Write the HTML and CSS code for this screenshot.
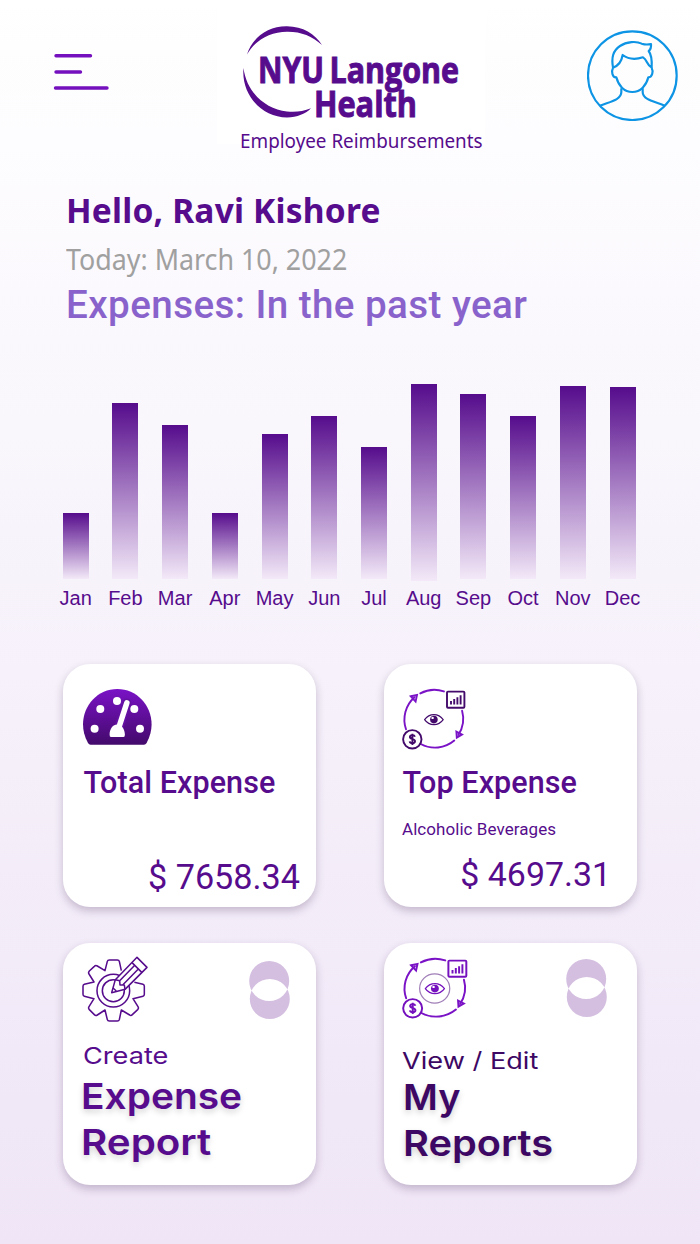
FILE: index.html
```html
<!DOCTYPE html>
<html lang="en">
<head>
<meta charset="utf-8">
<title>NYU Langone Health – Employee Reimbursements</title>
<link rel="stylesheet" href="styles.css">
</head>
<body>
<svg class="defs" width="0" height="0" aria-hidden="true">
  <symbol id="cycle" viewBox="0 0 66 64" preserveAspectRatio="none">
    <g class="cycle-arc">
      <path d="M5 42.3A29.8 29.8 0 0 1 13.5 10.3"/>
      <path d="M9.8 9.3L16 8L14.6 14.6Z"/>
      <path d="M19.3 6.4A29.8 29.8 0 0 1 42.9 4.4"/>
      <path d="M61.1 23.7A29.8 29.8 0 0 1 57.3 48"/>
      <path d="M55.4 44.6L55.8 50.6L61 47.6Z"/>
      <path d="M53.3 53.6A29.8 29.8 0 0 1 19.8 57"/>
    </g>
    <g class="cycle-node">
      <rect x="46" y="4.6" width="17.4" height="16.2" rx="1"/>
      <path d="M50 17.5v-3.5M53.2 17.5v-5.4M56.4 17.5v-7.2M59.6 17.5v-9.3"/>
      <circle cx="11.3" cy="52.3" r="9.2"/>
      <path d="M13.9 49.7c-.5-2.1-5-2.1-5 .4c0 2.7 5.1 1.5 5.1 4.2c0 2.5-4.9 2.5-5.3.1M11.4 46.7v11.2"/>
      <path class="cycle-eye" d="M23.6 32.6C28.4 25.9 37.4 25.9 42.2 32.6C37.4 39.3 28.4 39.3 23.6 32.6Z"/>
      <circle class="cycle-pupil" cx="32.9" cy="32.6" r="3.8"/>
      <circle class="cycle-glint" cx="31.6" cy="30.9" r="1.2"/>
    </g>
  </symbol>
  <symbol id="rings" viewBox="0 0 41 58">
    <path fill-rule="evenodd" d="M.2 20a20 20 0 0 1 40 0a20 20 0 0 1-40 0ZM.8 38a20 20 0 0 1 40 0a20 20 0 0 1-40 0Z"/>
  </symbol>
</svg>

<header class="header">
  <svg class="menu" viewBox="0 0 56 40">
    <path d="M3 3.7H37.500M3 20H27.500M2.500 36H54"/>
  </svg>
  <div class="brand">
    <svg class="logo" viewBox="217 0 268 126">
      <path d="M247 54.500C252 38 268 26 287 26.300C303 26.500 315 34 322 45C312 36 301 31.500 287 31.700C270 32 255 40 247 54.500Z"/>
      <path d="M243.500 68C241 95 262 117.500 287 117.500C297 117.500 306 113.500 311 108.300C303 111.500 295 112.500 287 111.500C265 109 246.500 92 243.500 68Z"/>
      <text x="258" y="82.700" textLength="66" lengthAdjust="spacingAndGlyphs">NYU</text>
      <text x="329.500" y="82.700" textLength="129.500" lengthAdjust="spacingAndGlyphs">Langone</text>
      <text x="314" y="117" textLength="103" lengthAdjust="spacingAndGlyphs">Health</text>
    </svg>
    <p class="tagline">Employee Reimbursements</p>
  </div>
  <svg class="avatar" viewBox="51 29 273 273">
    <circle cx="187" cy="166" r="133"/>
    <path d="M129 142C124 112 128 92 150 77C170 63 200 62 215 70C224 73 235 73 243 71C244 80 241 88 236 92C246 105 246 125 245 142C230 134 232 118 219 111C200 117 175 117 158 104C155 122 146 136 129 142Z"/>
    <path d="M129 143C124 152 126 172 139 171C145 195 162 215 187 215C212 215 229 195 235 171C248 170 250 152 245 143"/>
    <path d="M154 204V215C154 240 115 245 90 256M218 204V215C218 240 260 245 284 256"/>
  </svg>
</header>

<section class="intro">
  <h1 class="hello">Hello, Ravi Kishore</h1>
  <p class="today">Today: March 10, 2022</p>
  <h2 class="period">Expenses: In the past year</h2>
</section>

<section class="chart">
  <div class="month"><i class="bar" style="height:65.500px"></i><span>Jan</span></div>
  <div class="month"><i class="bar" style="height:175.500px"></i><span>Feb</span></div>
  <div class="month"><i class="bar" style="height:153.500px"></i><span>Mar</span></div>
  <div class="month"><i class="bar" style="height:65.500px"></i><span>Apr</span></div>
  <div class="month"><i class="bar" style="height:144.700px"></i><span>May</span></div>
  <div class="month"><i class="bar" style="height:162.500px"></i><span>Jun</span></div>
  <div class="month"><i class="bar" style="height:131.500px"></i><span>Jul</span></div>
  <div class="month"><i class="bar bar-long" style="height:197.500px"></i><span>Aug</span></div>
  <div class="month"><i class="bar" style="height:184.500px"></i><span>Sep</span></div>
  <div class="month"><i class="bar" style="height:162.500px"></i><span>Oct</span></div>
  <div class="month"><i class="bar" style="height:192.300px"></i><span>Nov</span></div>
  <div class="month"><i class="bar" style="height:191.500px"></i><span>Dec</span></div>
</section>

<main class="cards">
  <article class="card total">
    <svg class="gauge" viewBox="0 0 69 56">
      <defs><linearGradient id="gaugeFill" x1="0" y1="0" x2="0" y2="1"><stop offset="0" stop-color="#7a12c6"/><stop offset="1" stop-color="#430a6b"/></linearGradient></defs>
      <path fill="url(#gaugeFill)" d="M7.500 55.700Q6 55.700 5 54C1.500 48 0 41 0 35.500C0 16 15 0 34.300 0S68.600 16 68.600 35.500C68.600 41 67 48 63.600 54Q62.600 55.700 61 55.700Z"/>
      <g fill="#fff"><circle cx="11.600" cy="39.700" r="4"/><circle cx="17.300" cy="20" r="4"/><circle cx="34" cy="12" r="4"/><circle cx="51.300" cy="20" r="4"/><circle cx="57" cy="39.700" r="4"/></g>
      <path d="M36 38L43.800 14" stroke="#6410a2" stroke-width="9" stroke-linecap="round"/>
      <path d="M36 38L43.800 14" stroke="#fff" stroke-width="5.600" stroke-linecap="round"/>
      <path fill="#fff" d="M28 48Q26.500 48 26.600 45.500C26.800 39.500 30 35.500 34.200 35.500S41.700 39.500 41.900 45.500Q42 48 40.500 48Z"/>
    </svg>
    <h3 class="card-title">Total Expense</h3>
    <p class="amount">$ 7658.34</p>
  </article>

  <article class="card top">
    <svg class="cycle" viewBox="0 0 66 64"><use href="#cycle"/></svg>
    <h3 class="card-title">Top Expense</h3>
    <p class="category">Alcoholic Beverages</p>
    <p class="amount">$ 4697.31</p>
  </article>

  <article class="card create">
    <div class="card-head">
      <svg class="gear" viewBox="18 12 204 207">
        <path d="M139 62L133 34Q132 30 127 30H103Q98 30 97 34L90 62L67 48Q62 45 58 49L43 63Q39 68 42 72L57 96L28 103Q24 104 24 109V133Q24 138 28 139L57 146L42 170Q39 175 43 179L58 194Q62 198 67 195L90 180L97 209Q98 213 103 213H127Q132 213 133 209L139 180L164 195Q168 198 172 194L188 179Q192 175 189 170L174 146L204 139Q208 138 208 133V109Q208 104 204 103L178 97"/>
        <circle cx="115" cy="122" r="49"/><circle cx="115" cy="122" r="33"/>
        <path class="pencil" d="M110 128L121 89L186 22L216 52L150 118Z"/>
        <path d="M121 89L134 92L135 105L148 105L150 118M134 92L180 45M143 105L190 57M171 38L201 68M114 114L124 123"/>
      </svg>
      <svg class="rings"><use href="#rings"/></svg>
    </div>
    <p class="action">Create</p>
    <h3 class="headline"><span class="l1">Expense</span><span class="l2">Report</span></h3>
  </article>

  <article class="card view">
    <div class="card-head">
      <svg class="cycle" viewBox="0 0 66 64" preserveAspectRatio="none"><circle class="eye-ring" cx="32.700" cy="32.500" r="14.600"/><use href="#cycle"/></svg>
      <svg class="rings"><use href="#rings"/></svg>
    </div>
    <p class="action">View / Edit</p>
    <h3 class="headline"><span class="l1">My</span><span class="l2">Reports</span></h3>
  </article>
</main>
</body>
</html>
```
FILE: styles.css
```css
* { box-sizing: border-box; }
body {
  margin: 0;
  width: 700px;
  height: 1244px;
  overflow: hidden;
  color: #560c8c;
  background: linear-gradient(#ffffff 0%, #f9f6fc 35%, #efe5f6 100%);
  font-family: Roboto, sans-serif;
}
h1, h2, h3, p { margin: 0; white-space: nowrap; }
svg { display: block; flex: none; }
.defs { position: absolute; }

.header {
  display: flex;
  height: 160px;
  padding-left: 53px;
}
.menu {
  width: 56px;
  height: 40px;
  margin-top: 52px;
  fill: none;
  stroke: #7410bd;
  stroke-width: 3.4;
  stroke-linecap: round;
}
.brand { width: 268px; height: 144px; margin-left: 108px; background: #fff; }
.logo { width: 268px; height: 126px; fill: #560c8c; overflow: visible; }
.logo text {
  font: 700 36.5px "Open Sans", "Noto Sans", sans-serif;
  stroke: #560c8c;
  stroke-width: 1;
}
.tagline {
  padding-left: 24.500px;
  font: 400 20px/29px "Noto Sans", sans-serif;
  transform-origin: left;
  transform: scaleX(.942);
}
.avatar {
  width: 91px;
  height: 91px;
  margin: 30px 0 0 102px;
  fill: none;
  stroke: #0d94e4;
  stroke-width: 6.500;
  stroke-linejoin: round;
}

.intro { padding: 28px 0 0 66px; }
.hello { font: 700 33.500px/45px "Noto Sans", sans-serif; letter-spacing: .2px; }
.today {
  margin-top: 4px;
  color: #a0a0a0;
  font: 400 29px/44px "Noto Sans", sans-serif;
  transform-origin: left;
  transform: scaleX(.925);
}
.period { color: #8963cb; font: 500 38.600px/48px Roboto, sans-serif; letter-spacing: .43px; }

.chart {
  display: grid;
  grid-template-columns: repeat(12, 49.720px);
  align-items: end;
  height: 281px;
  padding-left: 50.800px;
}
.month {
  display: flex;
  flex-direction: column;
  align-items: center;
  font: 20px/24px "Liberation Sans", Arial, sans-serif;
}
.month span { margin-top: 7.500px; }
.bar { width: 26px; background: linear-gradient(#560c8c, #f3e9f8); }
.bar-long { margin-bottom: -2.500px; }

.cards {
  display: grid;
  grid-template-columns: 253px 253px;
  grid-template-rows: 243px 242px;
  gap: 36px 68px;
  padding: 54px 0 0 63px;
}
.card {
  display: flex;
  flex-direction: column;
  padding-left: 19px;
  border-radius: 27px;
  background: #fff;
  box-shadow: 0 4px 8px rgba(60, 30, 80, .25);
}
.gauge { width: 69px; height: 56px; margin: 25px 0 0 1px; fill: none; }
.card-title { margin: 17.500px 0 0 1.500px; font: 500 30.500px/40px Roboto, sans-serif; letter-spacing: .08px; }
.amount { font: 400 34.200px/40px Roboto, sans-serif; }
.total .amount { margin: 54px 16px 0 auto; }
.cycle { width: 66px; height: 64px; fill: none; }
.cycle-arc { stroke: #7a12c6; stroke-width: 1.900; stroke-linecap: round; }
.cycle-node { stroke: var(--node); stroke-width: 1.900; stroke-linejoin: round; }
.cycle-eye { stroke-width: 1.200; }
.cycle-pupil { fill: var(--node); stroke: none; }
.cycle-glint { fill: #fff; stroke: none; }
.top { --node: #430a6b; padding-left: 17px; }
.top .cycle { margin-top: 23px; }
.top .card-title { margin: 11.500px 0 0 1.500px; }
.category { margin: 14px 0 0 1px; font-size: 17px; line-height: 24px; letter-spacing: .06px; }
.top .amount { margin: 14px 26px 0 auto; font-size: 33.900px; }

.card-head { display: flex; justify-content: space-between; height: 80px; }
.gear {
  width: 68px;
  height: 69px;
  margin: 11px 0 0 -1px;
  fill: none;
  stroke: #560c8c;
  stroke-width: 4.600;
  stroke-linejoin: round;
}
.pencil { fill: #fff; }
.rings { width: 41px; height: 58px; fill: #d4bfe0; }
.create .rings { margin: 18px 26px 0 0; }
.create .action { margin: 17px 0 0 .500px; }
.action {
  font: 400 23px/32px Inter, sans-serif;
  transform-origin: left;
  transform: scaleX(1.18);
}
.headline {
  font: 600 36px/46px Inter, sans-serif;
  text-shadow: 0 3px 6px rgba(0, 0, 0, .18);
}
.headline span { display: block; transform-origin: left; }
.create .headline { margin: 1px 0 0 -1.500px; }
.create .l1 { transform: scaleX(1.08); }
.create .l2 { transform: scaleX(1.12); }
.view { --node: #7410bd; padding-left: 17px; color: #3d0863; }
.view .cycle { width: 68px; margin-top: 13px; }
.view .cycle-arc { stroke: #7410bd; }
.eye-ring { stroke: #a07fb8; stroke-width: 1.200; }
.view .rings { margin: 16px 30px 0 0; }
.view .action { margin: 22px 0 0 1px; }
.view .headline { margin: -3px 0 0 1.500px; }
.view .l1 { transform: scaleX(1.05); }
.view .l2 { transform: scaleX(1.105); }
```
